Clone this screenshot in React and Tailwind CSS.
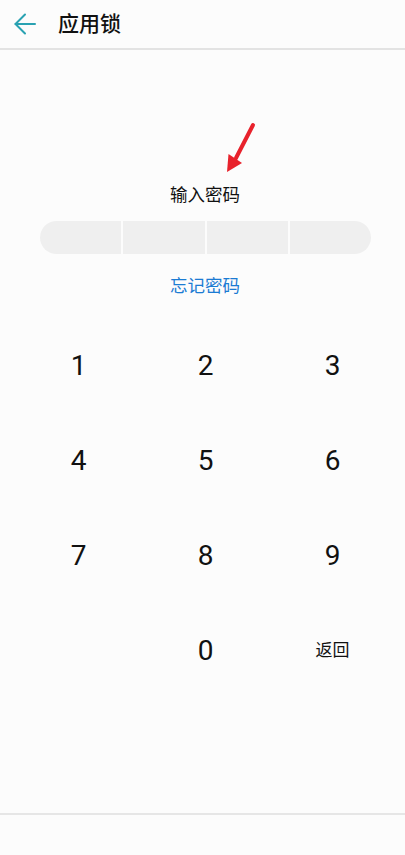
import { useState } from 'react';

const KEYS = ['1', '2', '3', '4', '5', '6', '7', '8', '9', '', '0', '返回'];

export default function App() {
  const [code, setCode] = useState('');

  function press(k) {
    if (k === '') return;
    if (k === '返回') {
      setCode(code.slice(0, -1));
      return;
    }
    if (code.length < 4) setCode(code + k);
  }

  return (
    <div
      className="relative w-[405px] h-[855px] flex flex-col bg-[#fcfcfc] text-[#111]"
      style={{ fontFamily: 'Roboto, "Noto Sans CJK SC", sans-serif' }}
    >
      <header className="h-[50px] flex items-center border-b-2 border-[#e3e3e3]">
        <button className="ml-[14px] w-[22px] h-[22px] flex items-center justify-center">
          <svg width="22" height="22" viewBox="0 0 22 22" fill="none" stroke="#2aa2b2" strokeWidth="2" strokeLinecap="round" strokeLinejoin="round">
            <path d="M21 11H1.5" />
            <path d="M11 1.5L1.5 11L11 20.5" />
          </svg>
        </button>
        <h1 className="ml-[22px] text-[21px] leading-none font-medium">应用锁</h1>
      </header>

      {/* annotation */}
      <svg className="absolute left-[220px] top-[118px]" width="40" height="60" viewBox="0 0 40 60">
        <path d="M33 7L16 40" stroke="#e8222c" strokeWidth="4" strokeLinecap="round" />
        <path d="M7 54L8.5 36L22 45Z" fill="#e8222c" />
      </svg>

      <p className="mt-[133px] pl-[5px] text-center text-[17.5px] leading-[24px]">输入密码</p>

      <div className="mt-[14px] ml-[40px] w-[331px] h-[33px] rounded-full overflow-hidden flex gap-[2px]">
        {[0, 1, 2, 3].map((i) => (
          <div key={i} className="flex-1 bg-[#efefef] flex items-center justify-center">
            {code.length > i && <span className="w-[10px] h-[10px] rounded-full bg-[#333]" />}
          </div>
        ))}
      </div>

      <p className="mt-[20px] pl-[5px] text-center text-[17.5px] leading-[24px] text-[#1b7bd3]">忘记密码</p>

      <div className="mt-[20px] ml-[15px] w-[381px] grid grid-cols-3">
        {KEYS.map((k, i) => (
          <button
            key={i}
            onClick={() => press(k)}
            className={`h-[95px] flex items-center justify-center ${k === '返回' ? 'text-[17px]' : 'text-[28px]'}`}
          >
            {k}
          </button>
        ))}
      </div>

      <div className="flex-1" />
      <div className="h-[42px] border-t-2 border-[#e6e6e6]" />
    </div>
  );
}
